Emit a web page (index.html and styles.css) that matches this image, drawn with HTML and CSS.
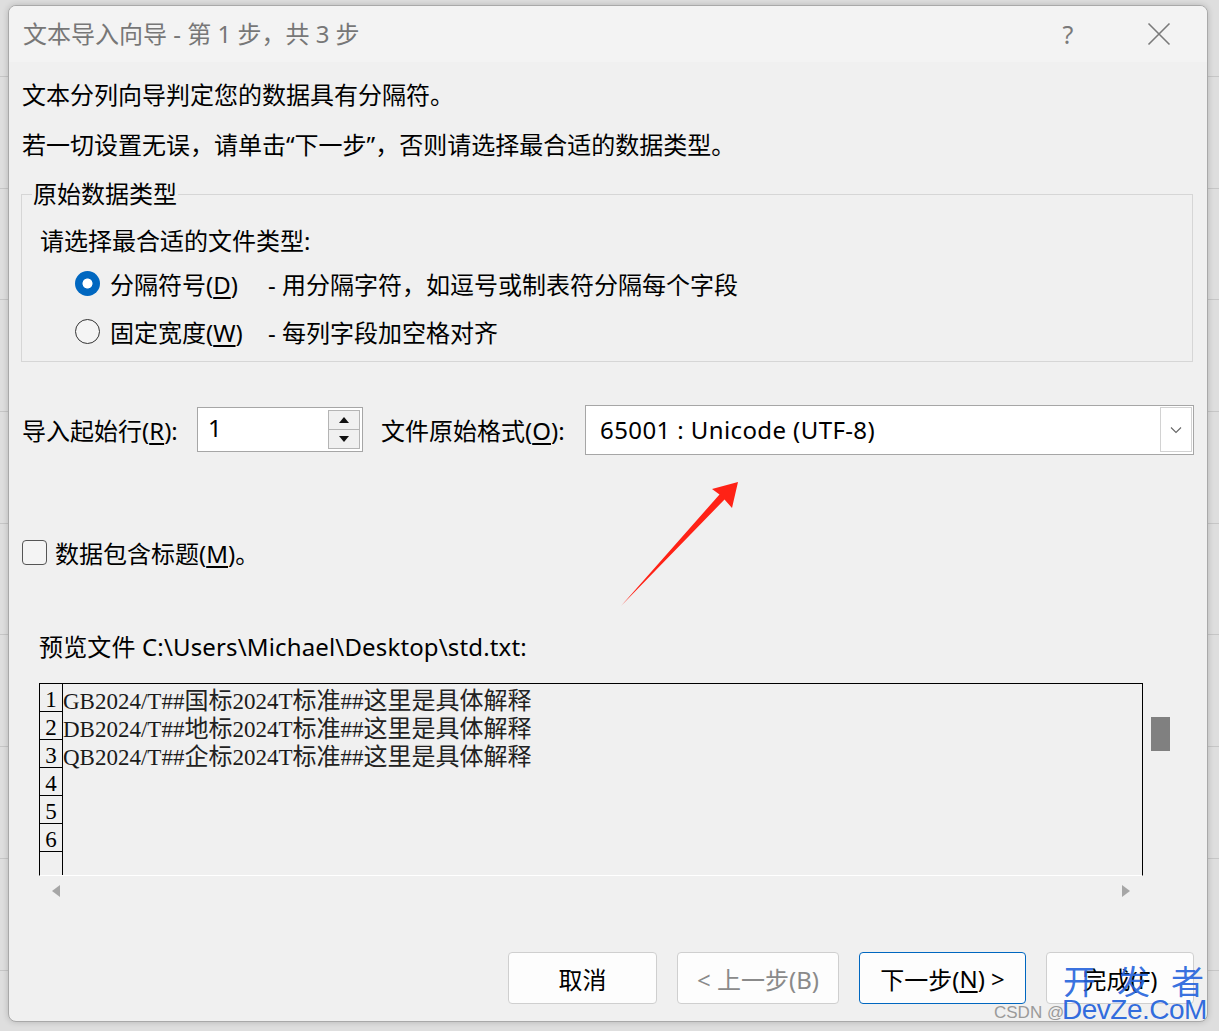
FILE: index.html
```html
<!DOCTYPE html>
<html lang="zh-CN">
<head>
<meta charset="utf-8">
<title>文本导入向导</title>
<link rel="stylesheet" href="styles.css">
</head>
<body>
<div class="dialog">
  <div class="titlebar">
    <span class="title">文本导入向导 - 第 1 步，共 3 步</span>
    <span class="help">?</span>
    <span class="close"><svg width="24" height="24" viewBox="0 0 24 24"><path d="M1.5 1.5 L22.5 22.5 M22.5 1.5 L1.5 22.5" stroke="#7a7a7a" stroke-width="1.6" fill="none"/></svg></span>
  </div>
  <div class="content">
    <p class="line">文本分列向导判定您的数据具有分隔符。</p>
    <p class="line">若一切设置无误，请单击“下一步”，否则请选择最合适的数据类型。</p>
    <fieldset class="group">
      <legend>原始数据类型</legend>
      <div class="group-body">
        <div class="prompt">请选择最合适的文件类型:</div>
        <div class="radio-row r1"><span class="radio on"></span><span class="rlabel">分隔符号(<u>D</u>)</span><span class="rdesc">- 用分隔字符，如逗号或制表符分隔每个字段</span></div>
        <div class="radio-row r2"><span class="radio"></span><span class="rlabel">固定宽度(<u>W</u>)</span><span class="rdesc">- 每列字段加空格对齐</span></div>
      </div>
    </fieldset>
    <div class="opts">
      <span class="lbl-start">导入起始行(<u>R</u>):</span>
      <div class="spin">
        <span class="spin-val">1</span>
        <div class="spin-btns"><span class="sb up"><i></i></span><span class="sb down"><i></i></span></div>
      </div>
      <span class="lbl-enc">文件原始格式(<u>O</u>):</span>
      <div class="select">
        <span class="sel-val">65001 : Unicode (UTF-8)</span>
        <span class="drop"><svg width="12" height="8" viewBox="0 0 12 8"><path d="M1 1.5 L6 6.5 L11 1.5" stroke="#666" stroke-width="1.1" fill="none"/></svg></span>
      </div>
    </div>
    <div class="check-row"><span class="checkbox"></span><span class="clabel">数据包含标题(<u>M</u>)。</span></div>
    <div class="preview-label">预览文件 C:\Users\Michael\Desktop\std.txt:</div>
    <div class="preview">
      <div class="pv-box">
        <div class="pv-row"><span class="ln">1</span><span class="pv-text">GB2024/T##<i>国标</i>2024T<i>标准</i>##<i>这里是具体解释</i></span></div>
        <div class="pv-row"><span class="ln">2</span><span class="pv-text">DB2024/T##<i>地标</i>2024T<i>标准</i>##<i>这里是具体解释</i></span></div>
        <div class="pv-row"><span class="ln">3</span><span class="pv-text">QB2024/T##<i>企标</i>2024T<i>标准</i>##<i>这里是具体解释</i></span></div>
        <div class="pv-row"><span class="ln">4</span><span class="pv-text"></span></div>
        <div class="pv-row"><span class="ln">5</span><span class="pv-text"></span></div>
        <div class="pv-row"><span class="ln">6</span><span class="pv-text"></span></div>
        <div class="pv-row last"><span class="ln"></span><span class="pv-text"></span></div>
      </div>
      <div class="vscroll"><span class="thumb"></span></div>
      <div class="hscroll"><span class="arr left"></span><span class="arr right"></span></div>
    </div>
    <div class="buttons">
      <span class="btn b-cancel">取消</span>
      <span class="btn b-back disabled">&lt; 上一步(B)</span>
      <span class="btn b-next default">下一步(<u>N</u>) &gt;</span>
      <span class="btn b-finish">完成(F)</span>
    </div>
  </div>
</div>
<div class="wm wm-cn">开发者</div>
<div class="wm wm-en">DevZe.CoM</div>
<div class="wm wm-csdn">CSDN @</div>
<svg class="arrow" width="1219" height="1031" viewBox="0 0 1219 1031">
  <polygon points="621,606 719.5,494.5 712,489 738,482 732,508 724.5,499.5" fill="#ff2216"/>
</svg>
</body>
</html>
```

FILE: styles.css
```css
html, body {
  margin: 0;
  padding: 0;
}
body {
  width: 1219px;
  height: 1031px;
  overflow: hidden;
  position: relative;
  background-color: #dedede;
  background-image: repeating-linear-gradient(to bottom, transparent 0, transparent 76px, #c6c6c6 76px, #c6c6c6 77px, transparent 77px, transparent 111.7px);
  font-family: "Noto Sans", "Noto Sans CJK SC", sans-serif;
  color: #000;
}
.dialog {
  margin: 5px 0 0 8px;
  width: 1200px;
  box-sizing: border-box;
  border: 1px solid #a9a9a9;
  border-radius: 8px;
  background: #f0f0f0;
  overflow: hidden;
  box-shadow: 0 0 6px rgba(0,0,0,0.18);
}
.titlebar {
  height: 56px;
  background: #f3f3f3;
  display: flex;
  align-items: center;
  padding: 0 25px 0 14px;
}
.title {
  flex: 1;
  font-size: 24px;
  color: #777;
  line-height: 30px;
}
.help {
  width: 40px;
  text-align: center;
  font-size: 25px;
  color: #7a7a7a;
  margin-right: 48px;
  line-height: 30px;
}
.close {
  width: 46px;
  display: flex;
  justify-content: center;
}
.content {
  padding: 8px 13px 17px 13px;
}
.line {
  margin: 0;
  font-size: 24px;
  line-height: 50px;
  white-space: nowrap;
}
.group {
  margin: 8px 1px 0 -1px;
  padding: 0;
  border: 1px solid #d6d6d6;
  min-width: 0;
}
.group legend {
  margin-left: 10px;
  padding: 0 1px;
  font-size: 24px;
  line-height: 32px;
}
.group-body {
  padding: 11px 0 4px 18px;
}
.prompt {
  font-size: 24px;
  line-height: 40px;
}
.radio-row {
  display: flex;
  align-items: center;
  padding-left: 35px;
  font-size: 24px;
}
.radio-row.r1 { height: 44px; }
.radio-row.r2 { height: 52px; }
.radio {
  width: 25px;
  height: 25px;
  box-sizing: border-box;
  border-radius: 50%;
  border: 1.5px solid #333;
  background: #f4f4f4;
  margin-right: 10px;
  flex: none;
}
.radio.on {
  border: none;
  background: radial-gradient(circle, #fff 0, #fff 4.6px, #0067c0 5.4px);
}
.rlabel {
  width: 158px;
  flex: none;
}
u {
  text-decoration: underline;
  text-underline-offset: 3px;
  text-decoration-thickness: 1.5px;
}
.opts {
  margin-top: 42px;
  height: 51px;
  display: flex;
  align-items: center;
  font-size: 24px;
}
.lbl-start {
  width: 175px;
  flex: none;
}
.spin {
  width: 166px;
  height: 45px;
  box-sizing: border-box;
  border: 1px solid #a6a6a6;
  background: #fff;
  display: flex;
  align-items: stretch;
  flex: none;
}
.spin-val {
  flex: 1;
  padding-left: 10px;
  line-height: 40px;
}
.spin-btns {
  width: 32px;
  margin: 2px 2px 2px 0;
  display: flex;
  flex-direction: column;
}
.sb {
  flex: 1;
  border: 1px solid #b4b4b4;
  background: #f0f0f0;
  display: flex;
  align-items: center;
  justify-content: center;
}
.sb.down { border-top: none; }
.sb i {
  display: block;
  width: 0;
  height: 0;
  border-left: 5px solid transparent;
  border-right: 5px solid transparent;
}
.sb.up i { border-bottom: 6px solid #111; }
.sb.down i { border-top: 6px solid #111; }
.lbl-enc {
  margin-left: 18px;
  width: 204px;
  flex: none;
}
.select {
  flex: 1;
  height: 50px;
  box-sizing: border-box;
  border: 1px solid #a6a6a6;
  background: #fff;
  display: flex;
  align-items: center;
}
.sel-val {
  flex: 1;
  padding-left: 14px;
  letter-spacing: 0.4px;
}
.drop {
  width: 32px;
  height: 45px;
  box-sizing: border-box;
  border: 1px solid #d2d2d2;
  margin-right: 1px;
  display: flex;
  align-items: center;
  justify-content: center;
}
.check-row {
  margin-top: 82px;
  height: 30px;
  display: flex;
  align-items: center;
  font-size: 24px;
}
.checkbox {
  width: 25px;
  height: 25px;
  box-sizing: border-box;
  border: 1.5px solid #555;
  border-radius: 4px;
  background: #f4f4f4;
  margin-right: 8px;
  flex: none;
}
.preview-label {
  margin-top: 65px;
  padding-left: 17px;
  font-size: 24px;
  line-height: 30px;
  white-space: nowrap;
  letter-spacing: 0.15px;
}
.preview {
  margin: 21px 0 0 17px;
  display: grid;
  grid-template-columns: 1104px 1fr;
  grid-template-rows: 193px 30px;
}
.pv-box {
  box-sizing: border-box;
  border: 1px solid #000;
  border-bottom: 1px solid #fff;
  overflow: hidden;
}
.pv-row {
  display: flex;
  height: 28px;
}
.ln {
  width: 23px;
  height: 28px;
  box-sizing: border-box;
  border-right: 1px solid #000;
  border-bottom: 1px solid #000;
  text-align: center;
  font-family: "Liberation Serif", serif;
  font-size: 23px;
  line-height: 22px;
  padding-top: 5px;
  flex: none;
  white-space: nowrap;
}
.pv-row.last .ln { border-bottom: none; height: 40px; }
.pv-text {
  font-family: "Liberation Serif", "Noto Sans CJK SC", serif;
  font-size: 23px;
  line-height: 25px;
  padding-top: 2px;
  white-space: nowrap;
  color: #1a1a1a;
}
.pv-text i {
  font-style: normal;
  font-family: "Noto Sans CJK SC", sans-serif;
  font-size: 24px;
  line-height: 25px;
  color: #222;
}
.vscroll {
  position: relative;
}
.thumb {
  display: block;
  width: 19px;
  height: 34px;
  margin: 34px 0 0 8px;
  background: #808080;
}
.hscroll {
  display: flex;
  align-items: center;
  justify-content: space-between;
  padding: 0 13px;
}
.arr {
  width: 0;
  height: 0;
  border-top: 6px solid transparent;
  border-bottom: 6px solid transparent;
}
.arr.left { border-right: 8px solid #a6a6a6; }
.arr.right { border-left: 8px solid #a6a6a6; }
.buttons {
  margin-top: 46px;
  display: flex;
  justify-content: flex-end;
  gap: 20px;
}
.btn {
  height: 52px;
  box-sizing: border-box;
  border: 1px solid #cfcfcf;
  border-radius: 4px;
  background: #fdfdfd;
  display: flex;
  align-items: center;
  justify-content: center;
  font-size: 24px;
}
.b-cancel { width: 149px; }
.b-back { width: 162px; }
.b-next { width: 167px; }
.b-finish { width: 148px; }
.btn.disabled { color: #8a8a8a; }
.btn.default { border-color: #0067c0; }
.wm {
  position: absolute;
  white-space: nowrap;
  pointer-events: none;
}
.wm-cn {
  left: 1063px;
  top: 962px;
  font-family: "Noto Sans CJK SC", sans-serif;
  font-size: 33px;
  line-height: 36px;
  letter-spacing: 21px;
  color: rgba(38, 100, 220, 0.92);
}
.wm-en {
  left: 1062px;
  top: 995px;
  font-family: "Liberation Sans", sans-serif;
  font-size: 28px;
  line-height: 30px;
  letter-spacing: -0.5px;
  color: rgba(38, 100, 220, 0.95);
}
.wm-csdn {
  left: 994px;
  top: 1003px;
  font-family: "Liberation Sans", sans-serif;
  font-size: 17px;
  line-height: 20px;
  color: #9a9a9a;
}
.arrow {
  position: absolute;
  left: 0;
  top: 0;
  pointer-events: none;
}
```
